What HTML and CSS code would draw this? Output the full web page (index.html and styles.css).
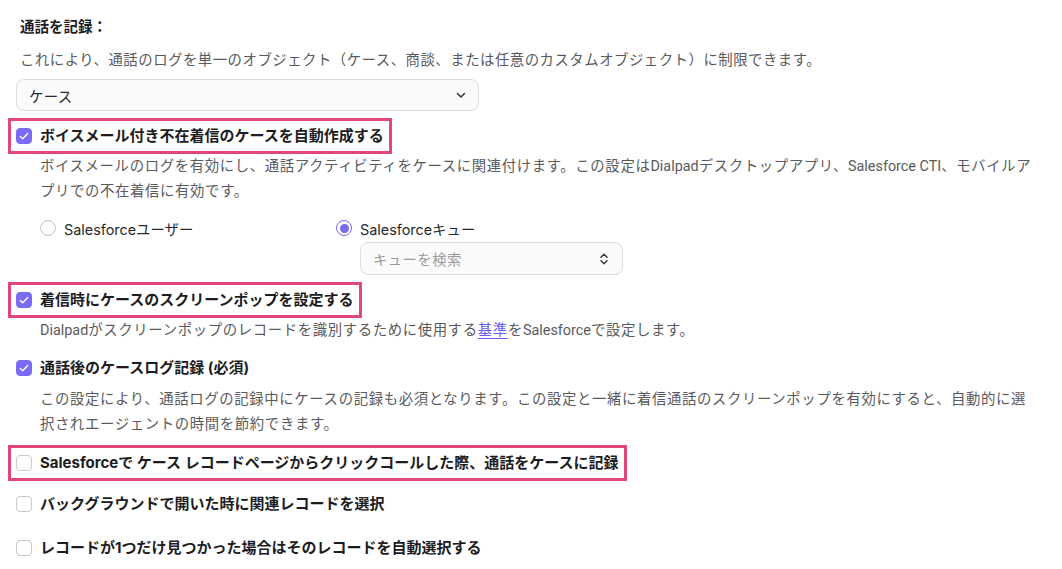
FILE: index.html
```html
<!DOCTYPE html>
<html lang="ja">
<head>
<meta charset="utf-8">
<title>通話を記録</title>
<link rel="stylesheet" href="styles.css">
</head>
<body>
<div class="page">
  <h2 class="title">通話を記録：</h2>
  <p class="intro">これにより、通話のログを単一のオブジェクト（ケース、商談、または任意のカスタムオブジェクト）に制限できます。</p>
  <div class="select main-select">
    <span class="value">ケース</span>
    <svg class="chev" width="12" height="12" viewBox="0 0 12 12"><path d="M2.5 4.5L6 8l3.5-3.5" fill="none" stroke="#333" stroke-width="1.5" stroke-linecap="round" stroke-linejoin="round"/></svg>
  </div>

  <div class="item item-1">
    <label class="row hl">
      <span class="cb on"><svg width="16" height="16" viewBox="0 0 16 16"><path d="M4.3 8.4l2.4 2.4 5-5.2" fill="none" stroke="#fff" stroke-width="1.4" stroke-linecap="round" stroke-linejoin="round"/></svg></span>
      <span class="lbl">ボイスメール付き不在着信のケースを自動作成する</span>
    </label>
    <p class="desc">ボイスメールのログを有効にし、通話アクティビティをケースに関連付けます。この設定は<span class="brand">Dialpad</span>デスクトップアプリ、<span class="brand">Salesforce CTI</span>、モバイルアプリでの不在着信に有効です。</p>
    <div class="radios">
      <div class="radio-col col-user">
        <label class="radio-row"><span class="radio"></span><span class="rlbl">Salesforceユーザー</span></label>
      </div>
      <div class="radio-col">
        <label class="radio-row"><span class="radio on"><span class="dot"></span></span><span class="rlbl">Salesforceキュー</span></label>
        <div class="select queue-select">
          <span class="placeholder">キューを検索</span>
          <svg class="updown" width="12" height="14" viewBox="0 0 12 14"><path d="M3 5.2L6 2.2l3 3M3 8.8l3 3 3-3" fill="none" stroke="#333" stroke-width="1.4" stroke-linecap="round" stroke-linejoin="round"/></svg>
        </div>
      </div>
    </div>
  </div>

  <div class="item item-2">
    <label class="row hl">
      <span class="cb on"><svg width="16" height="16" viewBox="0 0 16 16"><path d="M4.3 8.4l2.4 2.4 5-5.2" fill="none" stroke="#fff" stroke-width="1.4" stroke-linecap="round" stroke-linejoin="round"/></svg></span>
      <span class="lbl">着信時にケースのスクリーンポップを設定する</span>
    </label>
    <p class="desc"><span class="brand">Dialpad</span>がスクリーンポップのレコードを識別するために使用する<a class="link" href="#">基準</a>を<span class="brand">Salesforce</span>で設定します。</p>
  </div>

  <div class="item item-3">
    <label class="row">
      <span class="cb on"><svg width="16" height="16" viewBox="0 0 16 16"><path d="M4.3 8.4l2.4 2.4 5-5.2" fill="none" stroke="#fff" stroke-width="1.4" stroke-linecap="round" stroke-linejoin="round"/></svg></span>
      <span class="lbl">通話後のケースログ記録 (必須)</span>
    </label>
    <p class="desc desc-3">この設定により、通話ログの記録中にケースの記録も必須となります。この設定と一緒に着信通話のスクリーンポップを有効にすると、自動的に選択されエージェントの時間を節約できます。</p>
  </div>

  <div class="item item-4">
    <label class="row hl">
      <span class="cb"></span>
      <span class="lbl">Salesforceで ケース レコードページからクリックコールした際、通話をケースに記録</span>
    </label>
  </div>

  <div class="item item-5">
    <label class="row">
      <span class="cb"></span>
      <span class="lbl">バックグラウンドで開いた時に関連レコードを選択</span>
    </label>
  </div>

  <div class="item item-6">
    <label class="row">
      <span class="cb"></span>
      <span class="lbl">レコードが1つだけ見つかった場合はそのレコードを自動選択する</span>
    </label>
  </div>
</div>
</body>
</html>
```

FILE: styles.css
```css
* { box-sizing: border-box; }

html, body {
  margin: 0;
  padding: 0;
  background: #ffffff;
}

body {
  font-family: "Inter", "Noto Sans CJK JP", sans-serif;
  color: #1d1d1f;
}

.page {
  padding: 17px 24px 0 16px;
  width: 1062px;
}

.title {
  margin: 0 0 0 4px;
  font-size: 14.5px;
  line-height: 20px;
  font-weight: 700;
  color: #1d1d1f;
}

.intro {
  margin: 10px 0 0 4px;
  font-size: 14.4px;
  letter-spacing: 0.5px;
  line-height: 25px;
  color: #5a5a5e;
}

.select {
  display: flex;
  align-items: center;
  justify-content: space-between;
  border: 1px solid #dcdcdf;
  border-radius: 8px;
  background: #fafafa;
}

.main-select {
  margin-top: 7px;
  width: 463px;
  height: 32px;
  padding: 0 11px 0 12px;
  font-size: 14.4px;
  letter-spacing: 0.4px;
  color: #2a2a2d;
}

.item { display: block; }
.item-1 { margin-top: 15px; }
.item-2 { margin-top: 15px; }
.item-3 { margin-top: 15px; }
.item-4 { margin-top: 16px; }
.item-5 { margin-top: 21px; }
.item-6 { margin-top: 24px; }

.row {
  display: inline-flex;
  align-items: center;
  gap: 8px;
  height: 20px;
  vertical-align: top;
}

.row.hl {
  outline: 3px solid #e0457b;
  outline-offset: 5px;
}

.cb {
  width: 16px;
  height: 16px;
  flex: 0 0 16px;
  border-radius: 4px;
  border: 1px solid #c9c9ce;
  background: #ffffff;
  display: flex;
}

.cb.on {
  background: #7a6af4;
  border-color: #7a6af4;
}

.cb svg { margin: -1px; }

.lbl {
  font-size: 15px;
  font-weight: 700;
  line-height: 20px;
  color: #1d1d1f;
  white-space: nowrap;
}

.desc {
  margin: 8px 0 0 24px;
  font-family: "Roboto", "Noto Sans CJK JP", sans-serif;
  font-size: 14.4px;
  letter-spacing: 0.62px;
  line-height: 25px;
  color: #5a5a5e;
}

.desc .brand { letter-spacing: 0; }

.desc-3 { margin-top: 9px; }

.link {
  color: #6a5cf2;
  text-decoration: underline;
  text-underline-offset: 3px;
}

.radios {
  display: flex;
  margin: 14px 0 0 24px;
}

.col-user { width: 296px; }

.radio-row {
  display: flex;
  align-items: center;
  gap: 8px;
  height: 20px;
}

.radio {
  width: 16px;
  height: 16px;
  border-radius: 50%;
  border: 1px solid #c6c6cb;
  background: #fbfbfb;
  display: flex;
  align-items: center;
  justify-content: center;
}

.radio.on {
  border: 1.5px solid #7a6af4;
  background: #ffffff;
}

.radio .dot {
  width: 9px;
  height: 9px;
  border-radius: 50%;
  background: #7a6af4;
}

.rlbl {
  font-size: 14.4px;
  color: #2a2a2d;
}

.queue-select {
  margin: 4px 0 0 24px;
  width: 263px;
  height: 33px;
  padding: 0 12px 0 12px;
}

.placeholder {
  font-size: 14.4px;
  letter-spacing: 0.4px;
  color: #9a9a9e;
}
```
